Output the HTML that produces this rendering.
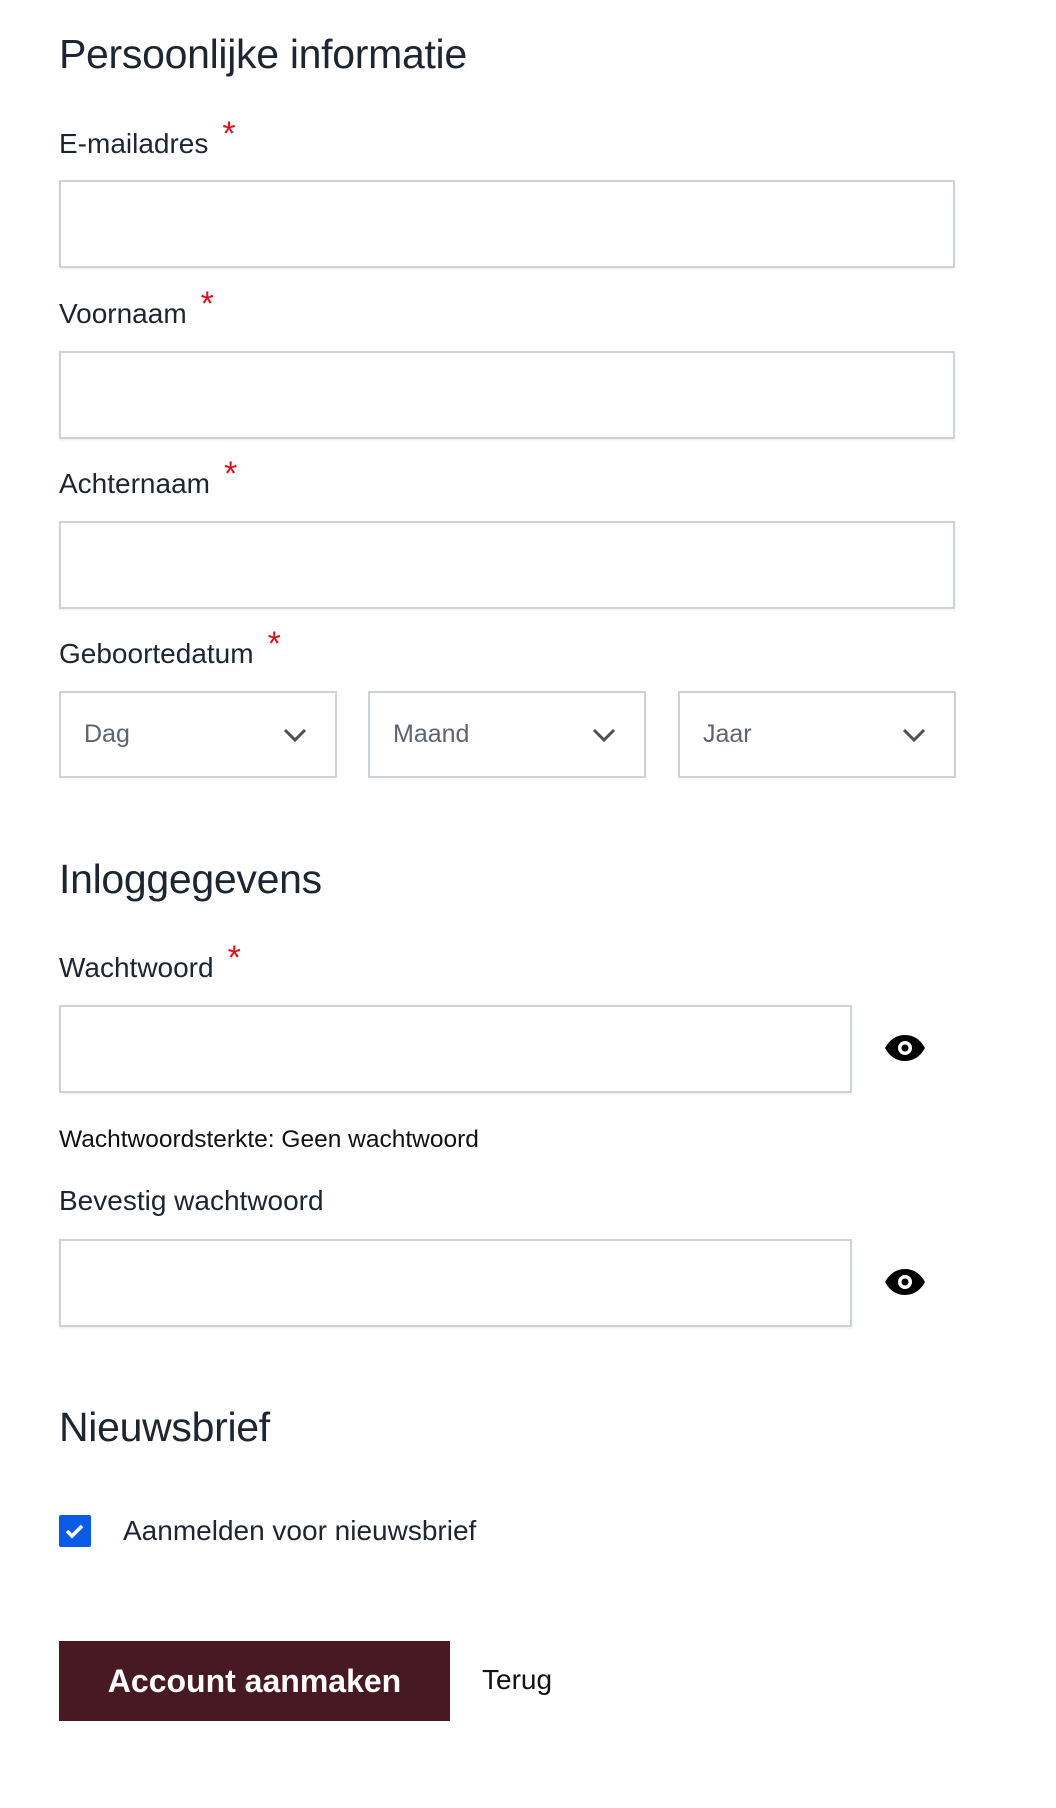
<!DOCTYPE html>
<html><head><meta charset="utf-8"><style>
*{box-sizing:border-box;margin:0;padding:0}
body{width:1056px;height:1808px;background:#fff;font-family:"Liberation Sans",sans-serif;color:#1d2530;position:relative;overflow:hidden}
.a{position:absolute}
h2{position:absolute;left:59px;font-weight:normal;font-size:41px;line-height:46px;color:#1d2530;letter-spacing:-0.3px}
.l{position:absolute;left:59px;font-size:28px;line-height:32px}
.l b{color:#e0101e;font-weight:normal;font-size:34px;position:relative;top:-8px;margin-left:14px}
.in{position:absolute;left:59px;width:896px;height:88px;border:2px solid #cfd2d8;box-shadow:0 1px 2px rgba(0,0,0,.08)}
.sel{position:absolute;top:691px;width:278px;height:87px;border:2px solid #cfd2d8;font-size:25px;color:#5d6470;line-height:83px;padding-left:23px}
.sel svg{position:absolute;right:28px;top:34px}
.eye{position:absolute;left:884px}
</style></head><body>
<h2 style="top:31px">Persoonlijke informatie</h2>
<div class="l" style="top:126px">E-mailadres<b>*</b></div>
<div class="in" style="top:180px"></div>
<div class="l" style="top:296px">Voornaam<b>*</b></div>
<div class="in" style="top:351px"></div>
<div class="l" style="top:466px">Achternaam<b>*</b></div>
<div class="in" style="top:521px"></div>
<div class="l" style="top:636px">Geboortedatum<b>*</b></div>
<div class="sel" style="left:59px">Dag<svg width="24" height="16" viewBox="0 0 24 16"><path d="M2 3l10 10 10-10" fill="none" stroke="#4a515c" stroke-width="3"/></svg></div>
<div class="sel" style="left:368px">Maand<svg width="24" height="16" viewBox="0 0 24 16"><path d="M2 3l10 10 10-10" fill="none" stroke="#4a515c" stroke-width="3"/></svg></div>
<div class="sel" style="left:678px">Jaar<svg width="24" height="16" viewBox="0 0 24 16"><path d="M2 3l10 10 10-10" fill="none" stroke="#4a515c" stroke-width="3"/></svg></div>
<h2 style="top:856px">Inloggegevens</h2>
<div class="l" style="top:950px">Wachtwoord<b>*</b></div>
<div class="in" style="top:1005px;width:793px"></div>
<svg class="eye" style="top:1034px" width="42" height="28" viewBox="0 0 42 28"><path d="M1 14C6 5 13 1 21 1s15 4 20 13c-5 9-12 13-20 13S6 23 1 14z" fill="#000"/><circle cx="21" cy="14" r="7" fill="#fff"/><circle cx="21" cy="14" r="3.5" fill="#000"/></svg>
<div class="a" style="left:59px;top:1126px;font-size:24.5px;line-height:28px;color:#111">Wachtwoordsterkte: Geen wachtwoord</div>
<div class="l" style="top:1185px">Bevestig wachtwoord</div>
<div class="in" style="top:1239px;width:793px"></div>
<svg class="eye" style="top:1268px" width="42" height="28" viewBox="0 0 42 28"><path d="M1 14C6 5 13 1 21 1s15 4 20 13c-5 9-12 13-20 13S6 23 1 14z" fill="#000"/><circle cx="21" cy="14" r="7" fill="#fff"/><circle cx="21" cy="14" r="3.5" fill="#000"/></svg>
<h2 style="top:1404px">Nieuwsbrief</h2>
<div class="a" style="left:59px;top:1515px;width:32px;height:32px;background:#0a5ce6;border-radius:2px"><svg width="32" height="32" viewBox="0 0 32 32"><path d="M8 16l5 5 10-10" fill="none" stroke="#fff" stroke-width="3.5"/></svg></div>
<div class="a" style="left:123px;top:1515px;font-size:28px;line-height:32px">Aanmelden voor nieuwsbrief</div>
<div class="a" style="left:59px;top:1641px;width:391px;height:80px;background:#461923;color:#fff;font-weight:bold;font-size:32px;line-height:80px;text-align:center">Account aanmaken</div>
<div class="a" style="left:482px;top:1664px;font-size:28px;line-height:32px;color:#111">Terug</div>
</body></html>
